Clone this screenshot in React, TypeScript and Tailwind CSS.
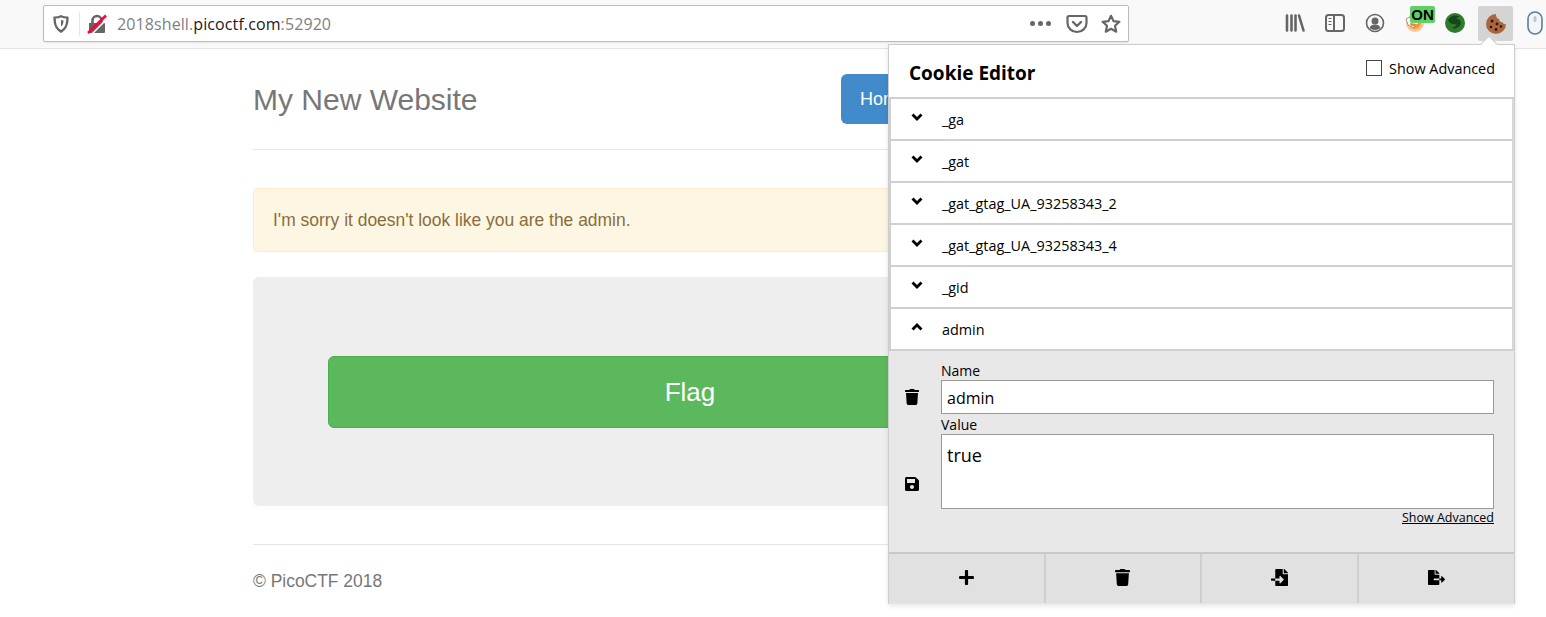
import { FaTrash, FaSave, FaPlus, FaFileImport, FaFileExport } from 'react-icons/fa'

const cookies = ['_ga', '_gat', '_gat_gtag_UA_93258343_2', '_gat_gtag_UA_93258343_4', '_gid']

function Toolbar() {
  return (
    <div className="h-[49px] bg-[#f9f9fa] border-b border-[#e3e3e4] flex items-start relative">
      {/* url bar */}
      <div className="ml-[43px] mt-[5px] w-[1086px] h-[37px] bg-white border border-[#bcbcbd] rounded-[2px] flex items-center shadow-[0_1px_2px_rgba(0,0,0,0.08)]">
        <svg width="16" height="18" viewBox="0 0 16 18" className="ml-[9px] shrink-0">
          <path d="M8 1.300c2 1 4 1.300 6.500 1.300 0 6.500-1 11-6.500 14C2.500 13.600 1.500 9.100 1.500 2.600 4 2.600 6 2.300 8 1.300z" fill="none" stroke="#666" strokeWidth="2.400" strokeLinejoin="round" />
          <path d="M8 5c.9.300 1.500.4 2.500.5 0 1.500-.3 4-1.700 5.500H8z" fill="#666" />
        </svg>
        <div className="w-px h-[24px] bg-[#e6e6e6] ml-[10px]" />
        <svg width="20" height="20" viewBox="0 0 20 20" className="ml-[7px] shrink-0">
          <path d="M2 9h15a1 1 0 0 1 1 1v8a1 1 0 0 1-1 1H2z" fill="#666" />
          <path d="M5.500 10V6.500a4.500 4.500 0 0 1 9 0V10" fill="none" stroke="#666" strokeWidth="2.600" />
          <path d="M5 20 L20 5" stroke="#fff" strokeWidth="1.500" />
          <path d="M1 19 L19 1.500" stroke="#ff0039" strokeWidth="2.600" />
        </svg>
        <div className="ml-[10px] text-[16px] text-[#808080] font-['Open_Sans',sans-serif] tracking-[0.1px] whitespace-nowrap">
          2018shell.<span className="text-[#1a1a1a]">picoctf.com</span>:52920
        </div>
        <div className="ml-auto flex items-center">
          <div className="flex gap-[3px] mr-[15px]">
            <span className="w-[5px] h-[5px] rounded-full bg-[#666]" />
            <span className="w-[5px] h-[5px] rounded-full bg-[#666]" />
            <span className="w-[5px] h-[5px] rounded-full bg-[#666]" />
          </div>
          <svg width="22" height="20" viewBox="0 0 22 20" className="mr-[13px]">
            <path d="M3 2h16a1.500 1.500 0 0 1 1.500 1.500V9a9.500 9 0 0 1-19 0V3.500A1.500 1.500 0 0 1 3 2z" fill="none" stroke="#666" strokeWidth="2.200" />
            <path d="M7 8l4 4 4-4" fill="none" stroke="#666" strokeWidth="2.400" strokeLinecap="round" strokeLinejoin="round" />
          </svg>
          <svg width="20" height="20" viewBox="0 0 20 20" className="mr-[7px]">
            <path d="M10 1.800l2.500 5.300 5.900.7-4.400 4 1.200 5.900L10 14.800l-5.200 2.900 1.200-5.900-4.400-4 5.900-.7z" fill="none" stroke="#666" strokeWidth="2.200" strokeLinejoin="round" />
          </svg>
        </div>
      </div>

      {/* right toolbar icons */}
      <div className="flex items-start ml-[156px]">
        <svg width="20" height="18" viewBox="0 0 20 18" className="mt-[14px]">
          <path d="M2 1.500v15M6.500 1.500v15M10.500 1.500v15M14 1.500l4.500 15" stroke="#666" strokeWidth="2.600" strokeLinecap="round" />
        </svg>
        <svg width="20" height="18" viewBox="0 0 20 18" className="mt-[14px] ml-[20px]">
          <rect x="1" y="1" width="18" height="16" rx="2.500" fill="none" stroke="#666" strokeWidth="2" />
          <path d="M9 1v16" stroke="#666" strokeWidth="2" />
          <path d="M3.500 4.500h3M3.500 7.500h3M3.500 10.500h3" stroke="#666" strokeWidth="1.200" />
        </svg>
        <svg width="20" height="20" viewBox="0 0 20 20" className="mt-[13px] ml-[20px]">
          <circle cx="10" cy="10" r="8.500" fill="none" stroke="#666" strokeWidth="1.600" />
          <circle cx="10" cy="8" r="3.500" fill="#666" />
          <path d="M4.500 15c1-3 3-3.500 5.500-3.500s4.500.5 5.500 3.500c-3 2.500-8 2.500-11 0z" fill="#666" />
        </svg>
        {/* extension with ON badge */}
        <div className="relative w-[20px] h-[20px] mt-[13px] ml-[20px]">
          <svg width="20" height="20" viewBox="0 0 20 20">
            <circle cx="10" cy="10" r="9" fill="#fbc78f" />
            <circle cx="10" cy="10" r="6" fill="#f59b45" />
            <path d="M1 6l4-2 9 6-5 5-6-3z" fill="#fff" stroke="#9a9a9a" strokeWidth="1" />
            <path d="M5 10l7 1-2 3-5-2z" fill="#f08a2c" />
          </svg>
          <div className="absolute left-[5px] top-[-7px] w-[25px] h-[17px] bg-[#5fd068] rounded-[2px] text-[15px] leading-[17px] font-bold text-black text-center font-['Liberation_Sans',sans-serif]">ON</div>
        </div>
        <svg width="20" height="20" viewBox="0 0 20 20" className="mt-[13px] ml-[20px]">
          <circle cx="10" cy="10" r="10" fill="#2f7a2c" />
          <path d="M3 7c2-4 7-6 12-3.500-2 0-3 1-3.500 2.500 3 0 5 2 4 5.500-2 3.500-6 5-9 3 2.500 0 5-1.500 5-3.500-3 1-7 0-8.500-4z" fill="#14481a" />
        </svg>
        <div className="relative ml-[13px] mt-[6px] w-[35px] h-[35px] bg-[#d4d4d4] rounded-[2px] flex items-center justify-center">
          <svg width="20" height="20" viewBox="0 0 20 20">
            <path d="M10 0a10 10 0 1 0 10 10c-1.500.5-3-.2-3.500-1.800C14.500 8.500 13 7 13.200 5 11.300 5 9.800 2.500 10 0z" fill="#a9663f" />
            <circle cx="6" cy="7" r="1.500" fill="#2c1a10" />
            <circle cx="11" cy="10" r="1.400" fill="#2c1a10" />
            <circle cx="15" cy="12.500" r="1.300" fill="#2c1a10" />
            <circle cx="5" cy="13" r="1.300" fill="#2c1a10" />
            <circle cx="10" cy="15.500" r="1.400" fill="#2c1a10" />
          </svg>
        </div>
        <svg width="16" height="24" viewBox="0 0 16 24" className="mt-[11px] ml-[14px]">
          <rect x="1" y="1" width="14" height="22" rx="7" fill="#f3f6f8" stroke="#5c7f94" strokeWidth="1.600" />
          <rect x="6.500" y="5" width="3" height="6" rx="1.500" fill="#bcc8d0" />
        </svg>
      </div>
    </div>
  )
}

function WebPage() {
  return (
    <div className="ml-[253px] w-[874px] font-['Liberation_Sans',sans-serif] text-[#777]">
      <div className="h-[101px] border-b border-[#e5e5e5] flex items-start justify-between">
        <h3 className="mt-[34px] text-[30px] leading-[33px] text-[#777]">My New Website</h3>
        <div className="mt-[25px] w-[286px] h-[50px] bg-[#428bca] rounded-[6px] text-white text-[18px] leading-[50px] pl-[19px] shrink-0">Home</div>
      </div>
      <div className="mt-[38px] h-[64px] bg-[#fdf6e3] border border-[#faebcc] rounded-[4px] pl-[19px] text-[#8a6d3b] text-[17.45px] leading-[62px]">
        I'm sorry it doesn't look like you are the admin.
      </div>
      <div className="mt-[25px] h-[229px] bg-[#eeeeee] rounded-[6px] px-[75px] pt-[79px]">
        <div className="h-[72px] bg-[#5cb85c] border border-[#4cae4c] rounded-[6px] text-white text-[26px] leading-[70px] text-center">Flag</div>
      </div>
      <div className="mt-[38px] border-t border-[#e5e5e5] pt-[26px] text-[17.45px] leading-[20px]">© PicoCTF 2018</div>
    </div>
  )
}

function CookieRow({ name, open }: { name: string; open?: boolean }) {
  return (
    <div className="h-[42px] border-b-2 border-x-2 border-[#d0d0d0] border-r-[#d8d8d8] flex items-center bg-white">
      <div className="w-[51px] pl-[20px] -mt-[4px]">
        <svg width="12" height="8" viewBox="0 0 12 8" className="block">
          <path d={open ? 'M1.500 6.500 L6 2 L10.500 6.500' : 'M1.500 1.500 L6 6 L10.500 1.500'} fill="none" stroke="#000" strokeWidth="2.800" />
        </svg>
      </div>
      <span className="text-[14.4px] text-black mt-[2px]">{name}</span>
    </div>
  )
}

function CookiePopup() {
  return (
    <div className="absolute left-[888px] top-[44px] w-[627px] h-[560px] bg-white border border-[#cdcdcd] border-b-[#e4e4e4] shadow-[0_2px_5px_rgba(0,0,0,0.1)] font-['Open_Sans',sans-serif] flex flex-col">
      <div className="absolute right-[19px] -top-[7px] w-3 h-3 bg-white border-l border-t border-[#cdcdcd] rotate-45" />
      <div className="h-[54px] border-b-2 border-[#d0d0d0] flex items-start justify-between relative">
        <h1 className="ml-[20px] mt-[15px] text-[19px] leading-[26px] font-bold text-black">Cookie Editor</h1>
        <label className="flex items-center mt-[13px] mr-[19px] text-[14.4px] text-black">
          <span className="w-[16px] h-[16px] border border-[#444] bg-white mr-[7px] -mt-[2px]" />
          Show Advanced
        </label>
      </div>
      {cookies.map(c => <CookieRow key={c} name={c} />)}
      <CookieRow name="admin" open />
      <div className="h-[201px] bg-[#e8e8e8] flex">
        <div className="w-[52px] relative text-[16px] text-black">
          <FaTrash className="absolute left-[15px] top-[38px]" />
          <FaSave className="absolute left-[15px] top-[125px]" />
        </div>
        <div className="w-[553px] pt-[11px] text-black">
          <div className="text-[14px] leading-[18px]">Name</div>
          <div className="h-[34px] bg-white border border-[#999] pl-[5px] text-[16px] leading-[34px]">admin</div>
          <div className="text-[14px] leading-[22px] -mb-[2px]">Value</div>
          <div className="h-[75px] bg-white border border-[#999] pl-[5px] text-[18px] leading-[40px]">true</div>
          <div className="text-right mt-[1px] text-[12.5px] leading-[16px] underline">Show Advanced</div>
        </div>
      </div>
      <div className="flex-1 grid grid-cols-[157px_156px_157px_1fr] bg-[#e1e1e1] border-t-2 border-[#c8c8c8] text-black">
        <div className="flex items-center justify-center border-r-2 border-[#cfcfcf] text-[17px] pb-[3px]"><FaPlus /></div>
        <div className="flex items-center justify-center border-r-2 border-[#cfcfcf] text-[17px] pb-[3px] pr-[1px]"><FaTrash /></div>
        <div className="flex items-center justify-center border-r-2 border-[#cfcfcf] text-[17px] pb-[3px]"><FaFileImport /></div>
        <div className="flex items-center justify-center text-[17px] pb-[3px]"><FaFileExport /></div>
      </div>
    </div>
  )
}

export default function App() {
  return (
    <div className="relative w-[1546px] h-[617px] overflow-hidden bg-white">
      <Toolbar />
      <WebPage />
      <CookiePopup />
    </div>
  )
}
